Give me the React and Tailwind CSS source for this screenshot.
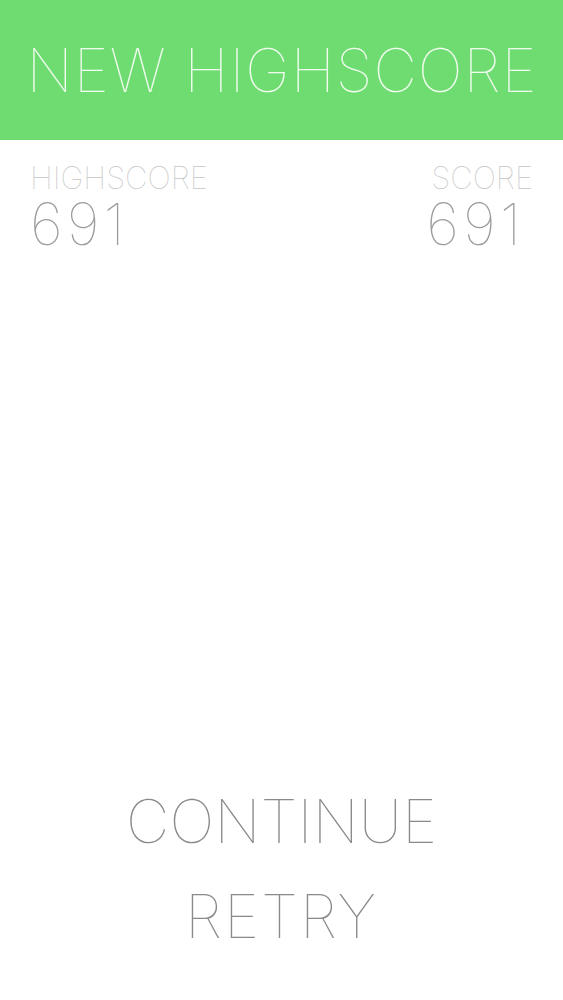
export default function App() {
  const font = { fontFamily: 'Inter, "Liberation Sans", sans-serif' };

  return (
    <div className="w-[563px] h-[1000px] bg-white flex flex-col font-thin" style={font}>
      <header className="h-[140px] bg-[#6fdc72] flex items-center justify-center">
        <h1 className="text-[60px] leading-none text-[#f0fcee] tracking-[1px] pl-[1px]">NEW HIGHSCORE</h1>
      </header>

      <div className="flex justify-between px-[30px] pt-[22px]">
        <div>
          <div className="text-[31px] leading-none text-[#c6c6c6]">HIGHSCORE</div>
          <div className="text-[58px] leading-none text-[#9c9c9c] mt-[2px] tracking-[4px]">691</div>
        </div>
        <div className="flex flex-col items-end">
          <div className="text-[31px] leading-none text-[#c6c6c6]">SCORE</div>
          <div className="text-[58px] leading-none text-[#9c9c9c] mt-[2px] mr-[8px] tracking-[4px]">691</div>
        </div>
      </div>

      <div className="flex-1" />

      <nav className="flex flex-col items-center gap-[35px] pb-[54px] text-[60px] leading-none text-[#8a8a8a]">
        <button className="font-thin">CONTINUE</button>
        <button className="font-thin tracking-[2px]">RETRY</button>
      </nav>
    </div>
  );
}
